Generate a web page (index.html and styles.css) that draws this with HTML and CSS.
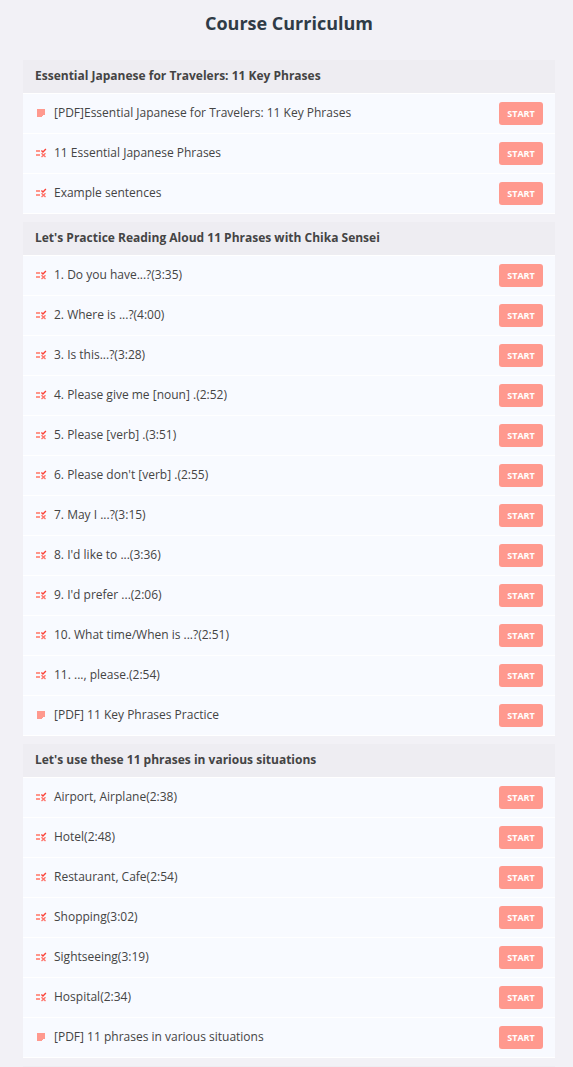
FILE: index.html
```html
<!DOCTYPE html>
<html lang="en">
<head>
<meta charset="utf-8">
<meta name="viewport" content="width=device-width, initial-scale=1">
<title>Course Curriculum</title>
<link rel="stylesheet" href="styles.css">
</head>
<body>
<svg class="sprite" aria-hidden="true">
  <symbol id="quiz" viewBox="0 0 12 12">
    <path d="M1 2h4v2H1zM1 6h4v2H1z" fill="#ff958a"/>
    <path d="M6.4 2.4 8 4l2.9-3" fill="none" stroke="#fb4238" stroke-width="1.4"/>
    <path d="m6.5 5.2 4 3.8m0-3.8L6.5 9" fill="none" stroke="#ff7067" stroke-width="1.3"/>
  </symbol>
  <symbol id="note" viewBox="0 0 12 12">
    <path d="M2 1h8v6H8v1H7v1H2z" fill="#ff998e"/>
  </symbol>
</svg>
<main class="page">
  <h1 class="title">Course Curriculum</h1>
  <div class="sections" id="sections"></div>
</main>
<script src="curriculum.js"></script>
</body>
</html>
```
FILE: styles.css
```css
* { box-sizing: border-box; }
body {
  margin: 0;
  background: #f2f1f6;
  color: #444;
  font: 12px/20px "Open Sans", sans-serif;
}
.sprite { position: absolute; width: 0; height: 0; }
.page { padding: 10px 18px 0 23px; }
.title {
  margin: 0 0 24px;
  color: #2f3b46;
  font-size: 18px;
  line-height: 26px;
  text-align: center;
}
.sections { display: grid; gap: 8px; }
.section-title {
  margin: 0;
  padding: 6px 12px 7px;
  background: #eeedf2;
  font-size: 12px;
  line-height: 20px;
}
.lessons {
  margin: 0;
  padding: 0;
  list-style: none;
  border-bottom: 1px solid #fff;
}
.lesson {
  display: flex;
  align-items: center;
  gap: 7px;
  height: 40px;
  padding: 0 12px;
  border-top: 1px solid #fff;
  background: #f8faff;
}
.icon { flex: none; width: 12px; height: 12px; }
.name { flex: 1; padding-bottom: 1px; }
.start {
  min-width: 44px;
  height: 23px;
  padding: 0 7px;
  border: 0;
  border-radius: 3px;
  background: #ff998e;
  color: #fff;
  font: 700 9px/23px "Open Sans", sans-serif;
  cursor: pointer;
}
```
FILE: curriculum.js
```js
const sections = [
  ["Essential Japanese for Travelers: 11 Key Phrases", [
    "[PDF]Essential Japanese for Travelers: 11 Key Phrases",
    "11 Essential Japanese Phrases",
    "Example sentences"]],
  ["Let's Practice Reading Aloud 11 Phrases with Chika Sensei", [
    "1. Do you have...?(3:35)",
    "2. Where is ...?(4:00)",
    "3. Is this...?(3:28)",
    "4. Please give me [noun] .(2:52)",
    "5. Please [verb] .(3:51)",
    "6. Please don't [verb] .(2:55)",
    "7. May I ...?(3:15)",
    "8. I'd like to ...(3:36)",
    "9. I'd prefer ...(2:06)",
    "10. What time/When is ...?(2:51)",
    "11. ..., please.(2:54)",
    "[PDF] 11 Key Phrases Practice"]],
  ["Let's use these 11 phrases in various situations", [
    "Airport, Airplane(2:38)",
    "Hotel(2:48)",
    "Restaurant, Cafe(2:54)",
    "Shopping(3:02)",
    "Sightseeing(3:19)",
    "Hospital(2:34)",
    "[PDF] 11 phrases in various situations"]]
];

const lesson = name => `<li class="lesson">
  <svg class="icon" aria-hidden="true"><use href="#${name.startsWith("[PDF]") ? "note" : "quiz"}"/></svg>
  <span class="name">${name}</span>
  <button class="start" type="button" aria-label="START ${name}">START</button>
</li>`;

document.getElementById("sections").innerHTML = sections.map(([title, lessons]) =>
  `<section><h2 class="section-title">${title}</h2><ul class="lessons">${lessons.map(lesson).join("")}</ul></section>`
).join("") + '<section class="section-title"></section>';
```
